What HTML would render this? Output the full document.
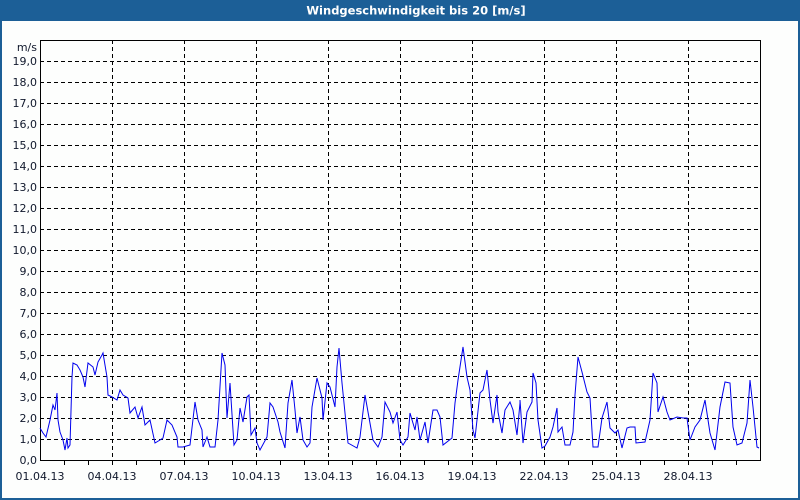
<!DOCTYPE html>
<html><head><meta charset="utf-8"><style>
html,body{margin:0;padding:0;width:800px;height:500px;overflow:hidden;background:#fff}
svg{display:block}
text{font-family:Tahoma,"DejaVu Sans","Liberation Sans",sans-serif;font-size:11px;fill:#10182c}
</style></head><body>
<svg width="800" height="500" viewBox="0 0 800 500" xmlns="http://www.w3.org/2000/svg">
<rect x="0" y="0" width="800" height="500" fill="#fdfefd"/>
<rect x="0" y="0" width="800" height="21" fill="#1c5f97"/>
<rect x="0" y="0" width="2" height="500" fill="#1c5f97"/>
<rect x="798" y="0" width="2" height="500" fill="#1c5f97"/>
<rect x="0" y="498" width="800" height="2" fill="#1c5f97"/>
<text x="416" y="14.5" text-anchor="middle" style="font-weight:bold;font-size:11.5px;fill:#fff">Windgeschwindigkeit bis 20 [m/s]</text>
<g stroke="#000" stroke-width="1" stroke-dasharray="4,3" shape-rendering="crispEdges">
<path d="M40 61.5H760M40 82.5H760M40 103.5H760M40 124.5H760M40 145.5H760M40 166.5H760M40 187.5H760M40 208.5H760M40 229.5H760M40 250.5H760M40 271.5H760M40 292.5H760M40 313.5H760M40 334.5H760M40 355.5H760M40 376.5H760M40 397.5H760M40 418.5H760M40 439.5H760"/>
<path d="M112.5 40V460M184.5 40V460M256.5 40V460M328.5 40V460M400.5 40V460M472.5 40V460M544.5 40V460M616.5 40V460M688.5 40V460"/>
</g>
<rect x="40.5" y="40.5" width="720" height="420" fill="none" stroke="#000" stroke-width="1" shape-rendering="crispEdges"/>
<g stroke="#000" shape-rendering="crispEdges">
<path d="M64.5 460V465M88.5 460V465M112.5 460V465M136.5 460V465M160.5 460V465M184.5 460V465M208.5 460V465M232.5 460V465M256.5 460V465M280.5 460V465M304.5 460V465M328.5 460V465M352.5 460V465M376.5 460V465M400.5 460V465M424.5 460V465M448.5 460V465M472.5 460V465M496.5 460V465M520.5 460V465M544.5 460V465M568.5 460V465M592.5 460V465M616.5 460V465M640.5 460V465M664.5 460V465M688.5 460V465M712.5 460V465M736.5 460V465"/>
</g>
<g text-anchor="end">
<text x="37" y="51">m/s</text>
<text x="37" y="65">19,0</text><text x="37" y="86">18,0</text><text x="37" y="107">17,0</text><text x="37" y="128">16,0</text><text x="37" y="149">15,0</text><text x="37" y="170">14,0</text><text x="37" y="191">13,0</text><text x="37" y="212">12,0</text><text x="37" y="233">11,0</text><text x="37" y="254">10,0</text><text x="37" y="275">9,0</text><text x="37" y="296">8,0</text><text x="37" y="317">7,0</text><text x="37" y="338">6,0</text><text x="37" y="359">5,0</text><text x="37" y="380">4,0</text><text x="37" y="401">3,0</text><text x="37" y="422">2,0</text><text x="37" y="443">1,0</text><text x="37" y="464">0,0</text>
</g>
<g text-anchor="middle">
<text x="40" y="480">01.04.13</text><text x="112" y="480">04.04.13</text><text x="184" y="480">07.04.13</text><text x="256" y="480">10.04.13</text><text x="328" y="480">13.04.13</text><text x="400" y="480">16.04.13</text><text x="472" y="480">19.04.13</text><text x="544" y="480">22.04.13</text><text x="616" y="480">25.04.13</text><text x="688" y="480">28.04.13</text>
</g>
<polyline fill="none" stroke="#0000ee" stroke-width="1" points="40,428 43,433 46,437 50,420 53,405 55,410 57,393 58,420 60,432 63,440 65,450 67,438 68,448 70,445 72,377 73,363 77,365 80,370 83,377 85,387 88,363 93,367 95,375 98,362 102,355 103,353 107,377 108,395 112,397 117,400 120,390 123,395 128,398 130,413 135,407 138,418 142,407 145,425 150,420 155,443 160,440 163,438 167,420 172,425 177,437 178,447 183,447 190,445 195,402 198,420 202,430 203,447 207,437 210,447 215,447 218,420 222,353 225,365 227,418 230,383 233,430 234,445 237,440 240,408 243,422 247,397 249,395 251,435 255,428 257,443 260,450 267,437 270,403 273,407 278,422 280,432 285,448 288,403 292,380 295,410 297,433 300,417 303,440 307,447 310,443 312,407 317,378 322,398 323,420 327,383 330,387 335,407 337,367 339,348 342,383 345,413 348,443 357,448 360,437 365,395 368,412 373,440 378,447 382,437 385,402 390,412 393,423 397,412 400,440 403,445 408,437 410,413 415,430 417,417 420,440 425,422 428,443 433,410 437,410 440,417 443,445 452,438 455,403 458,380 463,347 467,377 470,390 473,430 475,438 480,393 483,390 487,370 490,400 493,423 497,395 498,412 502,433 505,410 510,402 513,410 517,435 520,403 520,400 523,443 527,412 532,402 533,373 536,383 538,420 542,448 545,446 550,437 553,427 557,408 558,432 562,427 565,445 570,445 573,432 575,395 578,357 582,372 587,392 590,398 593,447 598,447 602,418 607,402 610,428 615,433 618,430 622,448 627,428 630,427 635,427 636,443 645,442 650,420 653,373 657,383 658,412 663,397 667,412 670,420 677,417 683,418 687,418 690,440 695,427 700,420 705,400 710,433 715,450 720,407 725,382 730,383 733,427 737,445 742,443 747,423 750,380 753,407 757,447 759,448"/>
</svg>
</body></html>
